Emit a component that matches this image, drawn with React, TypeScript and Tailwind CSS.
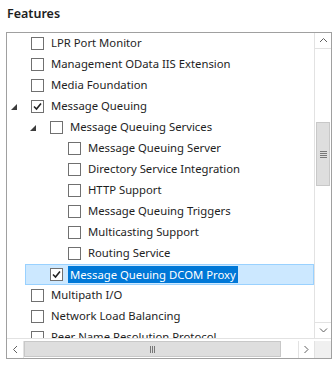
type Item = {
    label: string;
    level: number;
    expander?: boolean;
    checked?: boolean;
    selected?: boolean;
};

const items: Item[] = [
    { label: "LPR Port Monitor", level: 0 },
    { label: "Management OData IIS Extension", level: 0 },
    { label: "Media Foundation", level: 0 },
    { label: "Message Queuing", level: 0, expander: true, checked: true },
    { label: "Message Queuing Services", level: 1, expander: true },
    { label: "Message Queuing Server", level: 2 },
    { label: "Directory Service Integration", level: 2 },
    { label: "HTTP Support", level: 2 },
    { label: "Message Queuing Triggers", level: 2 },
    { label: "Multicasting Support", level: 2 },
    { label: "Routing Service", level: 2 },
    { label: "Message Queuing DCOM Proxy", level: 1, checked: true, selected: true },
    { label: "Multipath I/O", level: 0 },
    { label: "Network Load Balancing", level: 0 },
    { label: "Peer Name Resolution Protocol", level: 0 },
];

const indent = ["pl-[1px]", "pl-[20px]", "pl-[38px]"];

function Expander() {
    return (
        <svg width="6" height="6" viewBox="0 0 6 6" className="mr-[14px] ml-[3px] shrink-0">
            <polygon points="6,0 6,6 0,6" fill="#3c3c3c" />
        </svg>
    );
}

function Checkbox({ checked }: { checked?: boolean }) {
    return (
        <div className="flex h-[13px] w-[13px] shrink-0 items-center justify-center border border-[#707070] bg-white">
            {checked && (
                <svg width="9" height="9" viewBox="0 0 9 9">
                    <path d="M1 4.5 L3.5 7 L8 1.5" fill="none" stroke="#222" strokeWidth="1.6" />
                </svg>
            )}
        </div>
    );
}

function Row({ item }: { item: Item }) {
    const body = (
        <>
            {item.expander ? <Expander /> : <div className="w-[23px] shrink-0" />}
            <Checkbox checked={item.checked} />
            <span
                className={
                    item.selected
                        ? "ml-[5px] whitespace-nowrap bg-[#0078d7] px-[2px] leading-[17px] text-white"
                        : "ml-[7px] whitespace-nowrap"
                }
            >
                {item.label}
            </span>
        </>
    );

    if (item.selected) {
        return (
            <div className={`flex h-[21px] items-stretch ${indent[item.level]}`}>
                <div className="-ml-[2px] flex flex-1 items-center border border-[#99d1ff] bg-[#cce8ff] pl-[1px]">
                    {body}
                </div>
            </div>
        );
    }

    return <div className={`flex h-[21px] items-center ${indent[item.level]}`}>{body}</div>;
}

function Arrow({ dir }: { dir: "up" | "down" | "left" | "right" }) {
    const d = {
        up: "M1 5 L4.5 1.5 L8 5",
        down: "M1 1.5 L4.5 5 L8 1.5",
        left: "M5 1 L1.5 4.5 L5 8",
        right: "M1.5 1 L5 4.5 L1.5 8",
    }[dir];
    const vertical = dir === "up" || dir === "down";
    return (
        <svg width={vertical ? 9 : 7} height={vertical ? 7 : 9} viewBox={vertical ? "0 0 9 7" : "0 0 7 9"}>
            <path d={d} fill="none" stroke="#606060" strokeWidth="1" />
        </svg>
    );
}

export default function App() {
    return (
        <div className="h-[366px] w-[335px] bg-white font-['Noto_Sans',sans-serif] text-[11.3px] text-[#1e1e1e]">
            <div className="px-[7px] pt-[5px] text-[12.5px] font-semibold leading-[18px]">Features</div>

            <div className="mt-[9px] ml-[6px] flex h-[327px] w-[326px] flex-col border border-[#a0a0a0]">
                <div className="flex min-h-0 flex-1">
                    <div className="flex-1 overflow-hidden">
                        {items.map((item) => (
                            <Row key={item.label} item={item} />
                        ))}
                    </div>

                    <div className="flex w-[17px] flex-col border-l border-[#e2e2e2] bg-white">
                        <div className="flex h-[16px] items-center justify-center border-b border-[#e2e2e2]">
                            <Arrow dir="up" />
                        </div>
                        <div className="h-[73px]" />
                        <div className="mx-[1px] flex h-[64px] items-center justify-center border border-[#c8c8c8] bg-[#dedede]">
                            <div className="flex flex-col gap-[1px]">
                                <div className="h-[1px] w-[7px] bg-[#777]" />
                                <div className="h-[1px] w-[7px] bg-[#777]" />
                                <div className="h-[1px] w-[7px] bg-[#777]" />
                                <div className="h-[1px] w-[7px] bg-[#777]" />
                            </div>
                        </div>
                        <div className="flex-1" />
                        <div className="flex h-[16px] items-center justify-center border-t border-[#e2e2e2]">
                            <Arrow dir="down" />
                        </div>
                    </div>
                </div>

                <div className="flex h-[20px] border-t border-[#e2e2e2] pt-[2px]">
                    <div className="flex w-[17px] items-center justify-center border-r border-[#e2e2e2]">
                        <Arrow dir="left" />
                    </div>
                    <div className="mb-[1px] flex w-[257px] items-center justify-center border border-[#c8c8c8] bg-[#dedede]">
                        <div className="flex gap-[1px]">
                            <div className="h-[7px] w-[1px] bg-[#777]" />
                            <div className="h-[7px] w-[1px] bg-[#777]" />
                            <div className="h-[7px] w-[1px] bg-[#777]" />
                        </div>
                    </div>
                    <div className="flex-1" />
                    <div className="flex w-[16px] items-center justify-center border-l border-[#e2e2e2]">
                        <Arrow dir="right" />
                    </div>
                    <div className="w-[17px] border-l border-[#e2e2e2] bg-[#f0f0f0]" />
                </div>
            </div>
        </div>
    );
}
